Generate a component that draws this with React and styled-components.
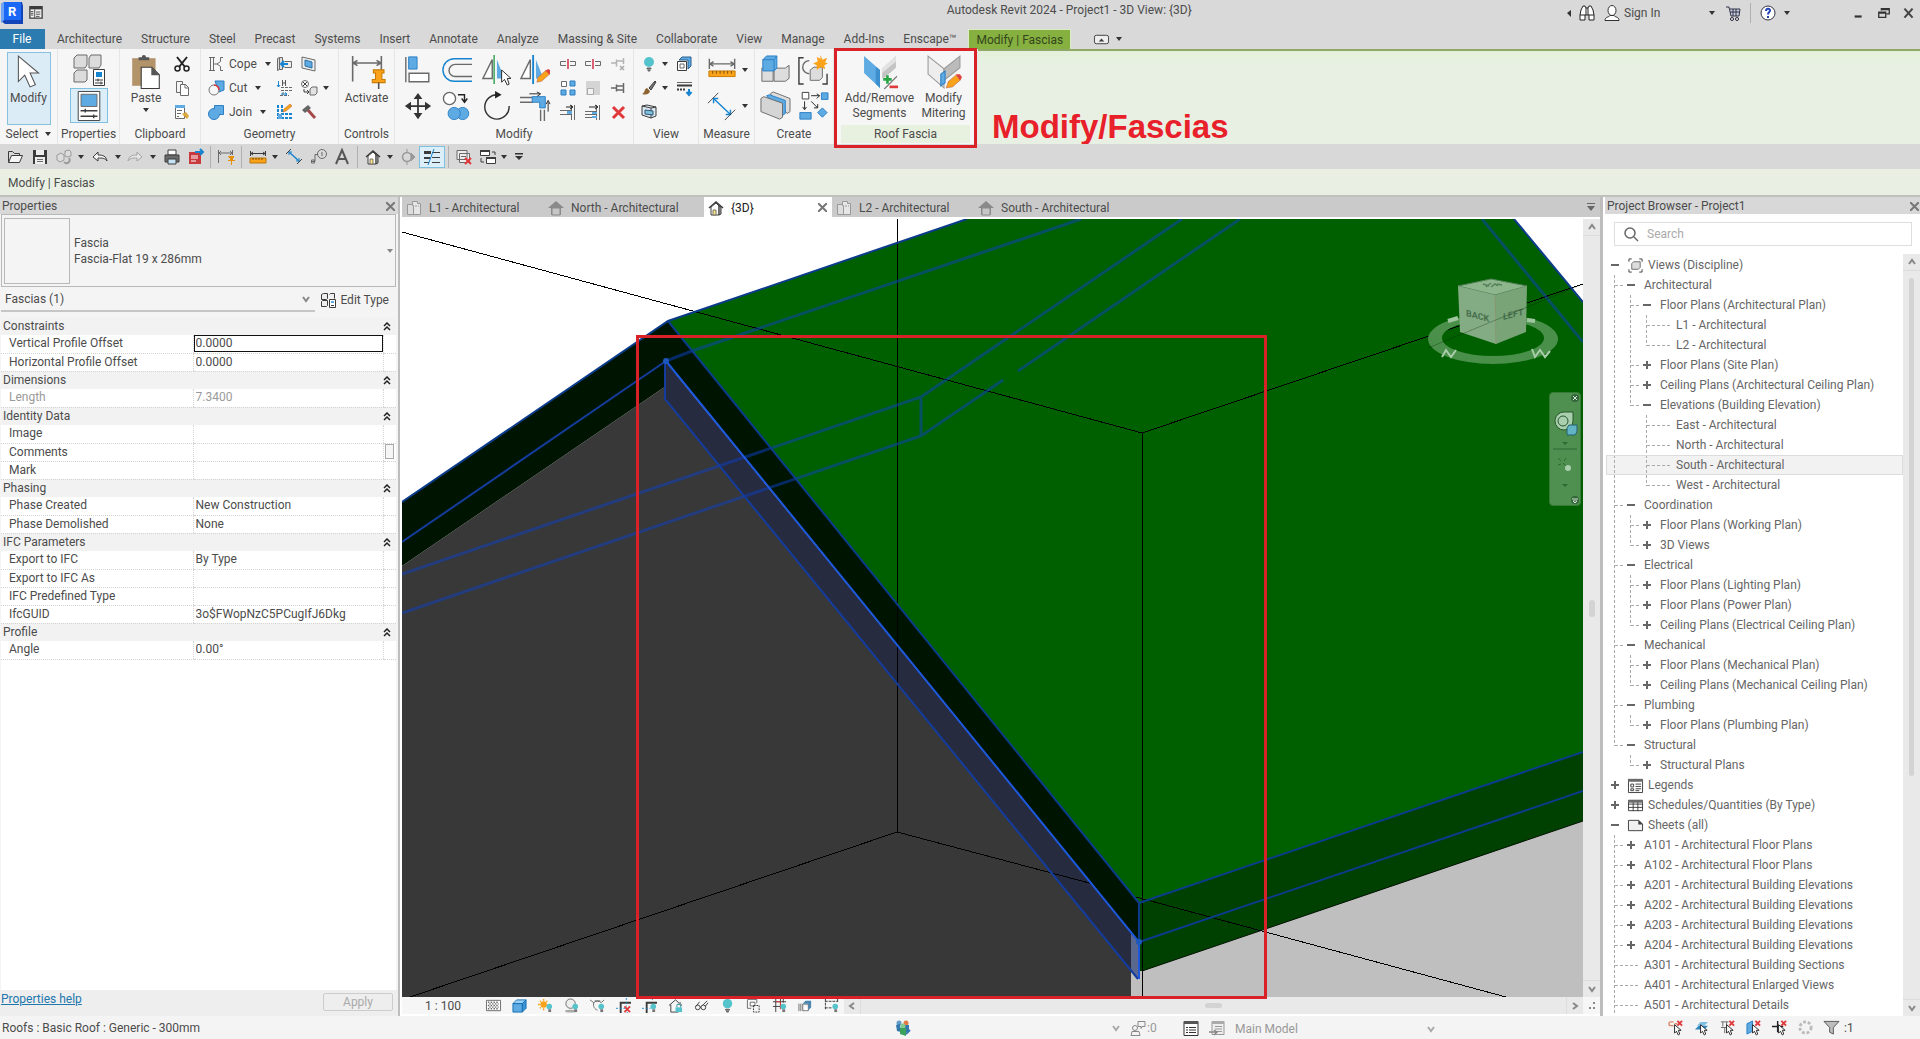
import React, { useState } from 'react';
import styled, { createGlobalStyle, css } from 'styled-components';

const FONT = `Roboto, 'Open Sans', 'Liberation Sans', sans-serif`;

const GlobalStyle = createGlobalStyle`
  * { box-sizing: border-box; }
  body {
    margin: 0;
    overflow: hidden;
    font-family: ${FONT};
    font-size: 12px;
    line-height: 16px;
    color: #4c4c4c;
    background: #f4f4f4;
  }
  button, input, select {
    font: inherit;
    color: inherit;
    border: 0;
    background: none;
    padding: 0;
    margin: 0;
    border-radius: 0;
  }
  svg { display: block; flex: none; }
`

/* ---------- drawings ---------- */

const B = '#5eaae2';
const D = '#3c3c3c';
const G = '#6a6a6a';
const O = '#f9a21a';

const redX = (x, y, s = 6) => <path d={`M${x} ${y}l${s} ${s}M${x + s} ${y}l${-s} ${s}`} stroke="#e0393c" strokeWidth="2" fill="none" />;
const bulb = (x, y) => <><circle cx={x} cy={y} r="3" fill="#55c3cc" /><path d={`M${x - 1} ${y + 3}h3v3h-3z`} fill="#777" /></>;
const pointer = (x, y) => <path d={`M${x} ${y}v9l2-2 2 4 1.500-1-1.500-4h3z`} fill="#fff" stroke="#222" />;

// 16 unit drawings
const small = {
  cut: <><path d="M3 1l8 10M13 1L5 11" stroke="#222" strokeWidth="2" /><circle cx="3.500" cy="12.500" r="2.500" stroke="#222" strokeWidth="1.500" fill="none" /><circle cx="12.500" cy="12.500" r="2.500" stroke="#222" strokeWidth="1.500" fill="none" /></>,
  copy: <><path d="M2.500 1.500h6v11h-6z" fill="#f5f5f5" stroke={G} /><path d="M6.500 4.500h5l3 3v8h-8z" fill="#fff" stroke={G} /><path d="M11 4v4h4" fill="none" stroke={G} /></>,
  match: <><path d="M1.500 1.500h9v13h-9z" fill="#fff" stroke={G} /><path d="M1 1h10v3H1z" fill={B} /><path d="M3 6.500h5M3 9.500h4M3 12.500h2" stroke={G} /><path d="M8 10l5 5 2-3-3-4z" fill="#dba63c" /></>,
  cope: <><path d="M1 1.500h6M1 14.500h6M2.500 2v12M5.500 2v12" stroke={G} fill="none" /><path d="M15 1.500h-2.500v4L9 8l3.500 2.500v4H15M9 8H6" stroke={G} fill="none" /></>,
  cutGeo: <><path d="M7 1h9v9l-5 2z" fill={B} stroke="#2a7fc5" /><circle cx="6" cy="10" r="5" fill="#f7f7f7" stroke="#777" /><path d="M6 5a5 5 0 0 1 5 5" stroke="#d33" strokeWidth="1.500" fill="none" /></>,
  join: <><path d="M6.500 1.500h9v9h-9z" fill={B} stroke="#2a7fc5" /><circle cx="6" cy="10" r="5.500" fill={B} stroke="#2a7fc5" /><path d="M7 2h8v8H7z" fill={B} /></>,
  wallJoin: <><path d="M1.500 2.500l2-1v12l-2 1zM3.500 1.500h3v12h-3" fill="#ddd" stroke={G} /><path d="M8.500 5.500h7v6h-7" fill="#eee" stroke={G} /><path d="M5 8h7M8 5L5 8l3 3" stroke="#1684cf" strokeWidth="2" fill="none" /></>,
  beam: <><path d="M5 7.500h11M5 10.500h11M7 12v4M4 15.500h9" stroke={G} fill="none" strokeDasharray="3 1" /><path d="M6.500 0v6M9.500 0v6M6 3h4" stroke="#555" fill="none" /><path d="M2.500 1v6M1 5l1.500 2L4 5M5 14h6M9 12.500l2 1.500-2 1.500" stroke="#1684cf" fill="none" /></>,
  unjoin: <><path d="M2 1v13h14M6 1v9h10" stroke="#1684cf" strokeWidth="2" strokeDasharray="3 1" fill="none" /><path d="M2 10h4v5H2z" fill={B} /><path d="M7 8l1-3 6-5 2 2-6 5z" fill={O} stroke="#b05a20" strokeWidth=".5" /></>,
  face: <><path d="M1 1l13 3v11L1 12z" fill="#eee" stroke={G} /><path d="M4 4l7 2v6l-7-2z" fill={B} stroke="#2a6fa5" /></>,
  demol: <><circle cx="4" cy="4" r="3.500" fill="#fff" stroke={G} /><path d="M2 2l4 4M6 2L2 6M3 9v3h5M6 10l2 2-2 2" stroke={D} fill="none" /><path d="M9 9l2-2h5v6l-2 2H9z" fill="#e2e2e2" stroke={G} /></>,
  hammer: <><path d="M6 5l8 9" stroke="#a54a4a" strokeWidth="3" /><path d="M1 6l6-5 3 3-6 5z" fill="#666" /></>,
  split: <><path d="M6 5.500H.500v4H6M10 5.500h5.500v4H10" stroke={G} fill="none" /><path d="M8 3v10" stroke="#cf3049" strokeWidth="1.500" /></>,
  array: <><path d="M1.500 1.500h5v5h-5z" fill="#fff" stroke={G} /><path d="M10 1h5v5h-5zM1 10h5v5H1zM10 10h5v5h-5z" fill={B} stroke="#2a7fc5" /></>,
  scale: <><path d="M1 1h14v14H1z" fill="#d4d4d4" /><path d="M2.500 8.500h6v6h-6z" fill="#f2f2f2" stroke="#aaa" /></>,
  trim1: <><path d="M0 6.500h11M0 10.500h11M14.500 1v15M11.500 1v15" stroke={G} /><path d="M6 3h6M10 1l3 2-3 2" stroke="#222" fill="none" /><path d="M7 7h5v3H7z" fill={B} /></>,
  trim2: <><path d="M0 7.500h11M0 10.500h11M0 13.500h11M14.500 1v15M11.500 1v15" stroke={G} /><path d="M4 3h7M10 1l3 2-3 2" stroke="#222" fill="none" /><path d="M7 8h5v2H7zM7 12h5v2H7z" fill={B} /></>,
  pin: <path d="M1 8h5M6.500 4.500v7M7 6h6M7 10h6M13.500 3v10" stroke={G} strokeWidth="1.500" fill="none" />,
  unpin: <><path d="M1 7h5M6.500 3.500v7M7 5h6M13.500 2v6" stroke="#b4b4b4" strokeWidth="1.500" fill="none" /><path d="M10 10l4 4M14 10l-4 4" stroke="#aaa" strokeWidth="1.500" /></>,
  del: <path d="M3 3l11 11M14 3L3 14" stroke="#e0393c" strokeWidth="3" />,
  light: <><circle cx="8" cy="6" r="5" fill="#55c3cc" /><path d="M6 12h4v1H6zM7 14h2v1H7z" fill="#666" stroke="#666" /></>,
  brush: <><path d="M8 8l6-7 1 1-5 8z" fill="#777" stroke={D} /><path d="M1 14c3-1 2-5 5-6l3 3c-1 4-5 4-8 3z" fill="#8b6430" /></>,
  viewBox: <><path d="M1.500 5.500h9v9h-9z" fill="#fff" stroke={D} /><path d="M4 8h4v4H4z" fill="#fff" stroke={G} /><path d="M3 4l3-3h9v9l-3 3V4z" fill={B} stroke="#2a5f8f" /></>,
  lineWeight: <><path d="M1 2.500h15" stroke={G} /><path d="M1 5.500h15" stroke={D} strokeWidth="2" /><path d="M1 9.500h9" stroke={D} strokeDasharray="2 1" strokeWidth="2" /><path d="M13 9v5M10.500 12l2.500 3 2.500-3" stroke="#1684cf" strokeWidth="2" fill="none" /></>,
  secBox: <><path d="M1 2l9 2v10l-9-3zM10 4l5-1v9l-5 2M1 2l5-1 9 2" fill="#d7e8f0" stroke={D} /><path d="M4 6l8 1v4l-8-1z" fill="#7ec2dd" stroke="#357" /></>,
  open: <><path d="M1.500 13.500v-11h4l2 2h5v3" fill="none" stroke={D} /><path d="M1.500 13.500l3-7h11l-3 7z" fill="#f5f5f5" stroke={D} /></>,
  save: <><path d="M1 1h14v14H1z" fill={D} /><path d="M4 1h8v5H4z" fill="#eee" /><path d="M3 8h10v7H3z" fill="#eee" /><path d="M5 10.500h6M5 12.500h6" stroke={G} /></>,
  sync: <><path d="M1 6l4-2 3 2v5l-4 2-3-2z" fill="#ddd" stroke="#999" /><path d="M9 2l4-1 2 2v4l-4 1-2-1z" fill="#ddd" stroke="#999" /><path d="M8 13a3 3 0 1 0 5-4" fill="none" stroke="#999" strokeWidth="2" /></>,
  undo: <path d="M1 8l5-5v3c5 0 8 1 9 6-2-3-5-3-9-3v3z" fill="#f5f5f5" stroke={D} />,
  redo: <path d="M15 8l-5-5v3c-5 0-8 1-9 6 2-3 5-3 9-3v3z" fill="#e5e5e5" stroke="#a5a5a5" />,
  print: <><path d="M4 1h8v5H4z" fill="#fff" stroke={D} /><path d="M1 6h14v7H1z" fill={G} stroke={D} /><path d="M4 10h8v5H4z" fill="#c7e2f4" stroke={D} /></>,
  exportPdf: <><path d="M1 3h12v12H1z" fill="#c93a3f" /><path d="M3 7h7M3 9h7M3 12h5" stroke="#fff" /><path d="M7 3h7M12 0l3 3-3 3" stroke="#1684cf" strokeWidth="2" fill="none" /></>,
  dimPin: <><path d="M.500 1v13M14.500 1v5M1 4h13M3 2L1 4l2 2M12 2l2 2-2 2" stroke={G} fill="none" /><path d="M10 7h6v2h-1v2h2v1h-3v4h-1v-4h-3v-1h2V9h-1z" fill="#e58f0a" /></>,
  measure: <><path d="M.500 2v5M15.500 2v5M1 4.500h14M3 3L1 4.500 3 6M13 3l2 1.500L13 6" stroke={D} fill="none" /><path d="M0 9h16v5H0z" fill={O} stroke="#b8760a" /><path d="M3 9v2M6 9v2M9 9v2M12 9v2" stroke="#7a5000" /></>,
  align: <><path d="M3 3l10 9" stroke="#1684cf" strokeWidth="1.500" /><path d="M3 6V3h3M13 9v3h-3" stroke="#1684cf" fill="none" /><path d="M0 5l5-5M11 15l5-5" stroke={D} /></>,
  tag: <><circle cx="11" cy="5" r="4.500" fill="none" stroke={G} /><path d="M11 3v4M1 12.500h3v-7h3M.500 11h3v3h-3z" stroke={G} fill="none" /></>,
  text: <path d="M2 15L8 1l6 14M4.500 10h7" stroke="#555" strokeWidth="2" fill="none" />,
  house: <><path d="M1 8l7-6 7 6" fill="none" stroke={D} strokeWidth="1.500" /><path d="M3 7l5-4 3 3v9H3z" fill="#fff" stroke={D} /><path d="M11 6l2 1v7l-2 1z" fill="#aaa" stroke={D} /><path d="M5 10h3v5H5z" fill="#ffe287" stroke="#776" /></>,
  elev: <><path d="M0 8l8-7 8 7h-3v7H3V8z" fill="#8a8a8a" /><path d="M4 8h8v7H4z" fill="#c6c6c6" stroke="#8a8a8a" /></>,
  plan: <><path d="M1.500 4.500h7v10h-7z" fill="#ddd" stroke="#999" /><path d="M6.500 1.500h5v2h3v11h-7v-9h-1z" fill="#e6e6e6" stroke="#999" /><path d="M9 6h4" fill="none" stroke="#999" strokeDasharray="2 1" /></>,
  section: <><circle cx="8" cy="8" r="4.500" fill="none" stroke="#999" strokeWidth="1.500" /><path d="M12 4l4 4-4 4zM8 0v3M8 13v3" fill="#999" stroke="#999" /></>,
  thin: <><path d="M0 2h7v3H0zM0 8h6v2H0z" fill={D} /><path d="M0 13.500h5M8 3.500h8M8 8.500h8M8 13.500h8" stroke={D} /><path d="M10 0L4 16" stroke="#1684cf" /></>,
  closeWin: <><path d="M1 1.500h10v9H1zM3.500 4.500h10v9h-10z" fill="#eee" stroke={G} /><path d="M5 7.500h5M5 10.500h4" stroke={G} />{redX(9, 9)}</>,
  switchWin: <><path d="M.500 1.500h9v5h-9zM6.500 8.500h9v6h-9z" fill="#fff" stroke={D} /><path d="M0 2h10M6 9h10" stroke={D} strokeWidth="2" /><path d="M15 6V3h-3M1 9v4h3" stroke={D} fill="none" /></>,
  views: <><path d="M4 1H1v3M12 1h3v3M4 15H1v-3M12 15h3v-3" stroke={D} fill="none" /><path d="M4 6l2-2h7v6l-2 2H4z" fill="#ddd" stroke={G} /></>,
  legend: <><path d="M.500 1.500h15v14H.500z" fill="#fff" stroke={D} /><path d="M0 1h16v3H0z" fill={G} /><path d="M3 6.500h3v3H3zM3 11.500h3v2H3zM8 6.500h6M8 9h6M8 11.500h6M8 13.500h4" stroke={D} fill="none" /></>,
  schedule: <><path d="M.500 2.500h15v11H.500zM0 6.500h16M0 10h16M5.500 3v11M10.500 3v11" fill="none" stroke={D} /><path d="M0 2h16v3H0z" fill={G} /></>,
  sheet: <><path d="M.500 2.500h11l4 4v7H.500z" fill="#f0f0f0" stroke={D} /><path d="M11 2v5h5z" fill={D} /></>,
  editType: <><path d="M1.500 2.500l2-1h4v5l-1 1h-5zM9.500 2.500l1-1h4v5M1.500 9.500l1-1h5v5l-1 1h-5z" fill="#eee" stroke={D} /><path d="M9.500 7.500h6v8h-6z" fill="#fff" stroke={D} /><path d="M11 9h3v2h-3z" fill={B} /><path d="M11 13.500h3" stroke={D} /></>,
  detail: <><path d="M.500 2.500h15v11H.500z" fill="#fff" stroke={G} /><path d="M2 4.500h12M2 8h12M2 11.500h12" stroke={G} strokeWidth="1.500" strokeDasharray="1.500 1.500" /><path d="M3.500 6.250h10M3.500 9.750h10" stroke={G} strokeWidth="1.500" strokeDasharray="1.500 1.500" /></>,
  cube: <><path d="M1 6l4-4h10l-4 4z" fill="#9bd0f5" stroke="#1470b4" /><path d="M1 6h10v9H1z" fill={B} stroke="#1470b4" /><path d="M11 6l4-4v9l-4 4z" fill="#3b93d5" stroke="#1470b4" /></>,
  sun: <><circle cx="6" cy="7" r="3.500" fill={O} /><path d="M6 1v2M6 11v2M0 7h2M2 3l1 1M10 3L9 4M2 11l1-1" stroke={O} strokeWidth="1.500" />{bulb(12, 9)}</>,
  shadow: <><ellipse cx="7" cy="14" rx="6" ry="1.500" fill="#aaa" /><circle cx="7" cy="6" r="5" fill="#eee" stroke={G} />{bulb(12, 9)}</>,
  teapot: <><path d="M0 2l4 3c1-2 7-2 8 0l3-3M4 5c-1 4 1 7 4 8M5 3h6" fill="none" stroke={G} />{bulb(12, 9)}</>,
  cropOff: <><path d="M5 16V5h11" fill="none" stroke={D} strokeWidth="2" /><path d="M0 11h12v5M11 0v9" fill="none" stroke="#1684cf" strokeDasharray="2 2" />{redX(9, 9)}</>,
  crop: <><path d="M5 16V5h11" fill="none" stroke={D} strokeWidth="2" /><path d="M0 11h9M11 0v3" fill="none" stroke="#1684cf" strokeDasharray="2 2" />{bulb(12, 9)}</>,
  lock: <><path d="M1 8l7-6 7 6M3 7v8h8" fill="none" stroke={D} /><path d="M10 5l4 4v-5z" fill="#999" /><path d="M8 10h7v5H8z" fill="#55c3cc" /><path d="M9.500 10V7h4v3" fill="none" stroke="#3a9aa3" /></>,
  glasses: <><circle cx="4" cy="10" r="2.500" fill="none" stroke={D} /><circle cx="10" cy="10" r="2.500" fill="none" stroke={D} /><path d="M2 9l4-5M9 8l5-5M6.500 10h1M12 9l3-4" stroke={D} /></>,
  analytic: <><path d="M1.500 1.500h10v4M1.500 2v9h4" fill="none" stroke={G} /><path d="M4.500 4.500h5v4h-5z" fill="#fff" stroke={G} /><path d="M8 8h6v7H8z" fill="none" stroke={D} strokeDasharray="2 1" /></>,
  grid: <><path d="M1 4h14M1 9h9M4 1v14M9 1v10M12 1v4" stroke={D} /><path d="M4 4h5v8" stroke="#d33" fill="none" />{bulb(12, 9)}</>,
  shape: <><path d="M5 6.500h6v7H5zM1 6v8M3 6v8" fill="none" stroke={G} /><path d="M5 6l3-3h6v7l-3 3V6z" fill="#4887b0" /><path d="M7 9h3v4H7z" fill="#fff" /></>,
  reveal: <><path d="M1.500 1v12M14.500 1v4M1 3.500h14M1 10.500h8" fill="none" stroke={D} strokeDasharray="3 1" />{bulb(12, 9)}</>,
  bino: <><path d="M2 5l2-4h2l1 2h2l1-2h2l2 4 1 5v5h-5v-5H6v5H1v-5z" fill="#fff" stroke="#222" /><path d="M7 3v7M9 3v7M1 10h5M10 10h5" stroke="#222" /></>,
  user: <><ellipse cx="8" cy="5.500" rx="4" ry="5" fill="#fff" stroke="#333" /><path d="M1 15.500c0-4 4-3 5-5h4c1 2 5 1 5 5z" fill="#fff" stroke="#333" /></>,
  cart: <><path d="M1 2h3l2 9h8l1-7H5" fill="#c9cfe3" stroke="#334" /><path d="M5 7h9M8 4v7M11 4v7" stroke="#334" /><circle cx="7" cy="14" r="1.500" fill="#fff" stroke="#223" /><circle cx="12" cy="14" r="1.500" fill="#fff" stroke="#223" /></>,
  help: <><circle cx="8" cy="8" r="7" fill="#fff" stroke="#334" /><path d="M6 6c0-3 4-3 4-.500C10 7.500 8 7 8 9.500M8 11v2" stroke="#2244bb" strokeWidth="2" fill="none" /></>,
  min: <path d="M3 12h8" stroke="#333" strokeWidth="2.500" />,
  restore: <path d="M5 5V3h9v6h-3M2 7h8v6H2zM5 4h9M2 8h8" fill="none" stroke="#333" strokeWidth="1.500" />,
  close: <path d="M3 2l10 11M13 2L3 13" stroke="#444" strokeWidth="2.500" />,
  home: <><path d="M1 2h14v13H1z" fill="#f5f5f5" stroke={D} strokeWidth="1.500" /><path d="M1 2h14v3H1z" fill={D} /><path d="M2 7.500h3M2 9.500h3M2 11.500h3M8 8h5M8 10.500h5M8 13h4M6.500 5v10" stroke={D} /></>,
  minimize: <><rect x=".500" y="3.500" width="15" height="9" rx="2" fill="#eee" stroke={D} /><path d="M5 10l3-3 3 3z" fill={D} /></>,
  search: <><circle cx="7" cy="7" r="5" fill="none" stroke="#666" strokeWidth="1.500" /><path d="M11 11l4 4" stroke="#666" strokeWidth="1.500" /></>,
  people: <><circle cx="4" cy="3" r="2.500" fill="#5f9ec9" /><circle cx="11" cy="3" r="2.500" fill="#e37b45" /><path d="M1 5l4-1 1 8-4-1zM9 5h5v7H9z" fill="#3478ae" /><circle cx="8" cy="6" r="2.500" fill="#86c98f" /><path d="M5 8h6v8l-6-2z" fill="#3ba25c" /><path d="M11 14l4-4" stroke="#3478ae" strokeWidth="2" /></>,
  requests: <><path d="M8 1.500h7v5h-3l-1 2v-2H8z" fill="none" stroke="#888" /><circle cx="5" cy="8" r="2.500" fill="none" stroke="#888" /><path d="M1 15.500l1-4h7l1 4z" fill="none" stroke="#888" /></>,
  list: <><path d="M1 1.500h14v14H1z" fill="#fff" stroke="#333" /><path d="M1 1h14v3H1z" fill="#555" /><path d="M3 7.500h2M3 10h2M3 12.500h2M6 7.500h7M6 10h7M6 12.500h7" stroke="#333" /></>,
  listOff: <><path d="M3 1.500h12v13H3z" fill="#eee" stroke="#999" /><path d="M3 1h12v3H3z" fill="#aaa" /><path d="M6 6.500h7M6 9h7M6 11.500h7" stroke="#999" /><path d="M0 12h7M5 10l3 2-3 3" stroke="#888" strokeWidth="1.500" fill="none" /></>,
  selLink: <><path d="M6 6H3a2 2 0 0 1 0-4h3M7 4h3" stroke="#d98a6a" strokeWidth="1.500" fill="none" />{redX(10, 1, 5)}{pointer(7, 5)}</>,
  selUnder: <><path d="M1 10l4-4h10l-4 4z" fill="#2f87c0" /><path d="M3 6l4-4h8l-4 4z" fill="#7fbfe3" />{pointer(7, 5)}</>,
  selPin: <><path d="M1 2h8M3 2v5M7 2v5M1 8h8M5 8v6" stroke={G} fill="none" />{redX(10, 1, 5)}{pointer(7, 5)}</>,
  selFace: <><path d="M1 4l6-3v11l-6 3z" fill={B} stroke="#2a7fc5" />{redX(10, 1, 5)}{pointer(7, 5)}</>,
  drag: <><path d="M0 7h12M6 1v12" stroke="#222" strokeWidth="1.500" />{redX(10, 1, 5)}{pointer(7, 5)}</>,
  wait: <circle cx="8" cy="8" r="6" fill="none" stroke="#bbb" strokeWidth="3" strokeDasharray="3 2" />,
  filter: <path d="M0 1.500h16L10 8v7l-4-2V8z" fill="#bdbdbd" stroke="#555" />,
};

// 32 unit drawings
const large = {
  arrow: <path d="M6 1v24l6-6 5 11 5-2-5-11h8z" fill="#fff" stroke="#555" />,
  typeProps: <><path d="M1 4l3-3h10v10l-2 3H1zM16 4l2-3h10v10l-2 3H16zM1 19l3-3h10v10l-2 2H1z" fill="#dcdcdc" stroke={G} /><path d="M20.500 15.500h11v16h-11z" fill="#fff" stroke={D} /><path d="M23 18h6v5h-6z" fill="#1684cf" /><path d="M22 26h8M22 29h8M25 24.500v3M28 27.500v3" stroke={D} /></>,
  props: <><path d="M4.500.500h23v31h-23z" fill="#fff" stroke={D} /><path d="M7.500 3.500h17v13h-17z" fill={B} stroke="#666" /><path d="M7 21h18M7 27h18M12 19v4M21 25v4" stroke={D} strokeWidth="1.500" /></>,
  paste: <><path d="M3 3h22v26H3z" fill="#b3936a" /><path d="M9 5h10V2h-3a2 2 0 0 0-4 0H9z" fill="#555" /><path d="M11.500 11.500h10l7 7v13h-17z" fill="#fff" stroke={D} /><path d="M21 11v8h8z" fill="#555" /></>,
  activate: <><path d="M2.500 1v24M29.500 1v14M3 7.500h26M7 5L3 7.500 7 10M25 5l4 2.500L25 10" stroke={G} strokeWidth="1.500" fill="none" /><path d="M22 14h10v3h-2v6h3v3H21v-3h3v-6h-2z" fill={O} stroke="#c87b00" /><path d="M27 26v6" stroke="#555" strokeWidth="1.500" /></>,
  alignG: <><path d="M3 2v27" stroke={G} strokeWidth="1.500" /><path d="M6 2h9v13H6z" fill={B} stroke="#2a7fc5" /><path d="M6.500 19.500h21v9h-21z" fill="#fff" stroke={G} strokeWidth="1.500" /></>,
  offset: <><path d="M32 4H13a12 12 0 0 0 0 24h19" fill="none" stroke="#1684cf" strokeWidth="1.500" /><path d="M32 10H14a6 6 0 0 0 0 13h18" fill="none" stroke={G} strokeWidth="1.500" /></>,
  mirrorPick: <><path d="M12 5v20H2z" fill="#fff" stroke={G} strokeWidth="1.500" /><path d="M14 0v31" stroke="#2fa04f" strokeWidth="1.500" /><path d="M17 5l8 20h-8z" fill={B} /><path d="M22 16v13l3-3 3 6 2-1-2-6h4z" fill="#fff" stroke="#222" /></>,
  mirrorDraw: <><path d="M11 5v20H1z" fill="#fff" stroke={G} strokeWidth="1.500" /><path d="M14 0v31" stroke="#1684cf" strokeWidth="2" /><path d="M17 5l8 20h-8z" fill={B} /><path d="M18 29l1-5 9-8 4 4-9 8z" fill={O} stroke="#a55" strokeWidth=".5" /><path d="M27 17l3-2 2 1v5z" fill="#df4440" /></>,
  move: <><path d="M16 6v20M6 16h20" stroke="#333" strokeWidth="2" /><path d="M16 1l5 7H11zM16 31l5-7H11zM1 16l7-5v10zM31 16l-7-5v10z" fill="#333" /></>,
  copyG: <><circle cx="8" cy="8" r="6.500" fill="#fff" stroke={G} strokeWidth="1.500" /><path d="M17 4h7v7M21 8l3 4 3-4" stroke="#222" strokeWidth="1.500" fill="none" /><circle cx="22" cy="24" r="6.500" fill={B} stroke="#2a7fc5" /><circle cx="13" cy="24" r="6.500" fill={B} stroke="#2a7fc5" /></>,
  rotate: <><path d="M18 4a13 13 0 1 0 12 12" fill="none" stroke="#333" strokeWidth="1.500" /><path d="M15 0l7 4-7 4z" fill="#222" /></>,
  trim: <><path d="M0 7h14M0 12h14M22 20v12M26 20v12" stroke={G} strokeWidth="1.500" /><path d="M10 3h11M18 1l4 2-4 3M30 22V12M28 14l2-4 2 4" stroke="#222" fill="none" /><path d="M13 6h14v12h-6v-6h-8z" fill={B} stroke="#2a7fc5" /></>,
  measureL: <><path d="M2.500 4v11M29.500 4v11M3 9.500h26M7 7L3 9.500 7 12M25 7l4 2.500L25 12" stroke={G} strokeWidth="1.500" fill="none" /><path d="M2 17h28v6H2z" fill={O} stroke="#c87b00" /><path d="M6 17v3M10 17v3M14 17v3M18 17v3M22 17v3M26 17v3" stroke="#7a5000" /></>,
  alignedL: <><path d="M7 8l18 17" stroke="#1684cf" strokeWidth="1.500" /><path d="M7 13V8h5M25 20v5h-5" stroke="#1684cf" strokeWidth="1.500" fill="none" /><path d="M1 13L12 2M19 31l11-11" stroke={D} /></>,
  group: <><path d="M2 14v14h12V14zM15 14h12l4-3v14l-4 3H15z" fill="#ddd" stroke={G} /><path d="M3 5l4-4h11v13l-3 3H3z" fill={B} stroke="#2a7fc5" /><path d="M3 5h12v12M15 5l3-4" fill="none" stroke="#2a7fc5" /></>,
  similar: <><path d="M6 3H1v28h5M26 31h5V20" fill="none" stroke={D} strokeWidth="1.500" /><path d="M12 6a7 7 0 1 0 0 14" fill="none" stroke={G} strokeWidth="1.500" /><path d="M13 16l4-3h9v11l-3 3H13z" fill="#ddd" stroke={G} /><path d="M24 0l2 5 5-2-2 5 3 1-4 2 1 4-5-2-4 3v-5l-4-2 5-2-1-5 4 2z" fill={O} /></>,
  parts: <><path d="M11 3l3-2 18 7v14l-3 2z" fill="#ddd" stroke={G} /><path d="M7 5l3-1 17 6v14l-3 2z" fill={B} stroke="#2a7fc5" /><path d="M1 8l3-2 20 7v15l-3 2-20-8z" fill="#d5d5d5" stroke={G} /></>,
  convert: <><path d="M4.500 1.500h7v7h-7z" fill="#fff" stroke={D} /><path d="M25 2h7v7h-7z" fill={B} stroke="#2a7fc5" /><path d="M14 5h9M20 3l3 2-3 3M7 11v8M5 17l2 3 2-3M14 11l7 7M21 14v4h-4" stroke="#222" fill="none" /><path d="M2 23h12v7H2z" fill={B} stroke="#2a7fc5" /><path d="M26 18l5 5-5 5-5-5z" fill={B} stroke="#2a7fc5" /></>,
  segments: <><path d="M1 1l15 13v17L1 17z" fill={B} /><path d="M12 11l4 3v17l-4-4z" fill="#3c8fcc" /><path d="M31 1L18 13v9l3-1 10-9z" fill="#c4c4c4" /><path d="M31 1L18 13v4L31 6z" fill="#e2e2e2" /><path d="M19 23h8M23 19v8" stroke="#27a744" strokeWidth="2.500" /><path d="M20 32l12-12" stroke="#777" /><path d="M25 30h8" stroke="#e0393c" strokeWidth="2.500" /></>,
  miter: <><path d="M1 1l15 12v18L1 18z" fill="#ededed" stroke="#999" /><path d="M31 1L16 13v11l15-12z" fill="#bbb" stroke="#999" /><path d="M13 18l4-3v11l-4 3z" fill={B} stroke="#2a7fc5" /><path d="M18 31l2-6 7-6 5 4-8 7z" fill={O} stroke="#a66" strokeWidth=".5" /><path d="M27 18h4l2 3-2 3z" fill="#df4440" /></>,
};

function Icon({ name, size = 16 }) {
  const big = large[name]
  const unit = big ? 32 : 16
  return (
    <svg width={size} height={size} viewBox={`0 0 ${unit} ${unit}`} fill="none" overflow="visible" aria-hidden="true">
      {big || small[name]}
    </svg>
  )
}

const Caret = ({ color = '#333' }) => (
  <svg width="6" height="4" viewBox="0 0 6 4"><path d="M0 0h6L3 4z" fill={color} /></svg>
)

const Cross = () => (
  <svg width="9" height="9" viewBox="0 0 9 9"><path d="M0 0l9 9M9 0L0 9" stroke="#777" strokeWidth="2" /></svg>
)

const Chevron = ({ turn = 0, color = '#888' }) => (
  <svg width="8" height="8" viewBox="0 0 8 8">
    <path d="M1 2l3 4 3-4" fill="none" stroke={color} strokeWidth="2" transform={`rotate(${turn} 4 4)`} />
  </svg>
)

/* ---------- frame ---------- */

const Shell = styled.div`
  display: flex;
  flex-direction: column;
  height: 100vh;
`
const center = css`
  display: flex;
  align-items: center;
  justify-content: center;
`
const IconButton = styled.button`
  ${center}
  width: ${p => p.$w || 24}px;
  height: ${p => p.$h || 24}px;
  flex: none;
`
const TitleBar = styled.header`
  display: grid;
  grid-template-columns: 945fr 616fr auto;
  height: 29px;
  background: #d9d9d9;
`
const Brand = styled.div`
  display: flex;
  align-items: flex-start;
  gap: 6px;
  padding: 2px 1px;
`
const Title = styled.div`
  padding-top: 2px;
  white-space: nowrap;
`
const TitleTools = styled.div`
  display: flex;
  align-items: center;
  height: 26px;
`
const WindowButtons = styled.div`
  display: flex;
  margin-left: 56px;
`
const SignIn = styled.button`
  width: 82px;
  text-align: left;
`
const Divider = styled.span`
  width: 1px;
  height: ${p => p.$h || 20}px;
  margin: 0 ${p => p.$m || 4}px;
  background: #b0b0b0;
`
const TabBar = styled.nav`
  display: flex;
  height: 20px;
  background: #d9d9d9;
`
const RibbonTab = styled.button`
  padding: 0 10px 0 9px;
  white-space: nowrap;
`
const FileTab = styled(RibbonTab)`
  width: 45px;
  margin-right: 3px;
  background: #2c7bb0;
  color: #fff;
`
const ActiveTab = styled(RibbonTab)`
  padding: 0 7px;
  margin: 0 16px 0 2px;
  border: solid #dcebc4;
  border-width: 1px 1px 0;
  background: #86b040;
  color: #34461c;
`
const Ribbon = styled.div`
  display: flex;
  height: 95px;
  background: #f6f6f6;
`
const RibbonFill = styled.div`
  flex: 1;
  display: flex;
  align-items: flex-end;
  padding-left: 14px;
  border-top: 2px solid #8fa866;
  background: linear-gradient(#e4f1da, #e8f0e4 16px);
`
const Note = styled.strong`
  font: bold 33px/34px 'Liberation Sans', Arial, sans-serif;
  color: #e8202a;
`
const Group = styled.section`
  position: relative;
  display: flex;
  flex-direction: column;
  flex: none;
  width: ${p => p.$w}px;
  padding: 3px 0 0;
  border-right: 1px solid #e6e6e6;
`
const GroupBody = styled.div`
  display: flex;
  justify-content: ${p => p.$start ? 'flex-start' : 'center'};
  height: 73px;
  padding: 0 ${p => p.$pad || 0}px;
`
const GroupLabel = styled.button`
  display: flex;
  align-items: center;
  justify-content: center;
  gap: 7px;
  height: 18px;
  margin: 0 ${p => p.$green ? 7 : 0}px;
  background: ${p => p.$green ? '#e8f0df' : 'none'};
`
const Marker = styled.span`
  position: absolute;
  inset: ${p => p.$inset};
  border: 3px solid #d92128;
  pointer-events: none;
`
const BigButton = styled.button`
  display: flex;
  flex-direction: column;
  align-items: center;
  gap: 2px;
  padding: 3px 0 0;
  width: ${p => p.$w}px;
  line-height: 15px;
  ${p => p.$on && css`
    background: #dcecf6;
    outline: 1px solid #86c2dd;
    outline-offset: -1px;
  `}
`
const Column = styled.div`
  display: flex;
  flex-direction: column;
  width: ${p => p.$w}px;
`
const Toggle = styled(IconButton)`
  border: 1px solid #7fbfdf;
  background: #dceef7;
`
const SmallRow = styled.button`
  display: flex;
  align-items: center;
  gap: 5px;
  height: 24px;
  svg:last-child { margin-left: 3px; }
`
const QuickBar = styled.div`
  display: flex;
  align-items: center;
  height: 25px;
  padding-left: 2px;
  background: #d8d8d8;
`
const OptionsBar = styled.div`
  height: 28px;
  padding: 6px 8px;
  border-bottom: 2px solid #bfc1bc;
  background: #e9f0e3;
`
const Work = styled.main`
  display: flex;
  flex: 1;
  min-height: 0;
`

/* ---------- properties ---------- */

const Panel = styled.aside`
  display: flex;
  flex-direction: column;
  flex: none;
  width: ${p => p.$w}px;
  background: #f4f4f4;
`
const PanelHead = styled.div`
  display: flex;
  align-items: center;
  justify-content: space-between;
  height: 17px;
  padding: 1px 0 0 2px;
  background: #d8d8d8;
`
const TypeSelector = styled.button`
  display: flex;
  align-items: center;
  gap: 4px;
  height: 73px;
  margin: 0 2px 0 1px;
  padding: 2px;
  border: 1px solid #b8b8b8;
  text-align: left;
  svg { margin-left: auto; }
`
const Preview = styled.span`
  width: 66px;
  height: 66px;
  border: 1px solid #b8b8b8;
`
const TypeRow = styled.div`
  display: flex;
  align-items: center;
  height: 30px;
  padding: 0 9px 4px 1px;
`
const InstanceSelect = styled.label`
  display: flex;
  align-items: center;
  flex: 1;
  height: 24px;
  padding-right: 5px;
  border-bottom: 2px solid #c6c6c6;
  select {
    flex: 1;
    appearance: none;
    padding-left: 4px;
    outline: 0;
  }
`
const EditType = styled.button`
  display: flex;
  align-items: center;
  gap: 4px;
  padding-left: 5px;
`
const PropScroll = styled.div`
  flex: 1;
  min-height: 0;
  margin: 0 2px 0 1px;
  background: #fff;
`
const PropTable = styled.table`
  width: 100%;
  table-layout: fixed;
  border-collapse: collapse;
  th, td {
    height: 18px;
    padding: 0;
    line-height: 16px;
    text-align: left;
    font-weight: normal;
  }
`
const Section = styled.tr`
  background: #f2f2f2;
  th { padding-left: 2px; }
`
const PropRow = styled.tr`
  color: ${p => p.$off ? '#9a9a9a' : '#4c4c4c'};
  th, td {
    vertical-align: top;
    border-bottom: 1px dotted #d4d4d4;
  }
  th { padding-left: 8px; }
  td { border-left: 1px dotted #d4d4d4; }
`
const Value = styled.input`
  display: block;
  width: 100%;
  height: 17px;
  padding: 0 0 1px ${p => p.$focus ? 1 : 2}px;
  border: ${p => p.$focus ? '1px solid #111' : 0};
  background: none;
  outline: 0;
`
const TinyButton = styled.button`
  display: block;
  width: 9px;
  height: 15px;
  margin-left: 1px;
  border: 1px solid #aaa;
  background: #f6f6f6;
`
const PropFoot = styled.div`
  display: flex;
  justify-content: space-between;
  height: 26px;
  padding: 1px 5px 0 1px;
  background: #eee;
  a { color: #2277ad; }
`
const Apply = styled.button`
  width: 70px;
  height: 18px;
  margin-top: 2px;
  border: 1px solid #ccc;
  border-radius: 2px;
  color: #aaa;
`
const Splitter = styled.div`
  flex: none;
  width: ${p => p.$w}px;
  border: solid #fff;
  border-width: 0 2px 0 0;
  background: #bdbdbd;
`

/* ---------- view area ---------- */

const ViewArea = styled.section`
  display: flex;
  flex-direction: column;
  flex: 1;
  min-width: 0;
  background: #fff;
`
const ViewTabs = styled.div`
  display: flex;
  height: 20px;
  margin-bottom: 2px;
  background: #cacaca;
`
const ViewTab = styled.button`
  display: flex;
  align-items: center;
  gap: 7px;
  width: ${p => p.$w}px;
  padding: 1px 5px 0 4px;
  background: ${p => p.$on ? '#fff' : 'none'};
  color: ${p => p.$on ? '#222' : '#4c4c4c'};
  svg + span { flex: 1; text-align: left; }
`
const Spacer = styled.span`
  flex: 1;
`
const ViewMiddle = styled.div`
  display: flex;
  flex: 1;
  min-height: 0;
`
const Canvas = styled.div`
  position: relative;
  flex: 1;
  min-width: 0;
  > svg {
    width: 100%;
    height: 100%;
  }
`
const ViewMarker = styled(Marker)`
  z-index: 1;
`
const NavBar = styled.div`
  position: absolute;
  top: 173px;
  right: 2px;
  display: flex;
  flex-direction: column;
  align-items: center;
  width: 32px;
  height: 114px;
  border: 1px solid #357a35;
  border-radius: 4px;
  background: #4f8f4f;
`
const ScrollV = styled.div`
  display: flex;
  flex-direction: column;
  align-items: center;
  justify-content: space-between;
  flex: none;
  width: ${p => p.$w || 17}px;
  background: #e9e9e9;
`
const Thumb = styled.span`
  width: ${p => p.$w}px;
  height: ${p => p.$h}px;
  border-radius: 3px;
  background: #d3d3d3;
`
const TreeThumb = styled(Thumb)`
  margin-top: 7px;
`
const ScrollButton = styled(IconButton)`
  border: solid #dcdcdc;
  border-width: ${p => p.$edge};
`
const ViewBar = styled.div`
  display: flex;
  align-items: center;
  height: 17px;
  margin-bottom: 2px;
  background: #f6f6f6;
`
const Scale = styled.button`
  width: 78px;
  padding-left: 4px;
`
const ScrollH = styled.div`
  display: flex;
  align-items: center;
  justify-content: space-between;
  flex: 1;
  height: 17px;
  background: #e9e9e9;
`

/* ---------- browser ---------- */

const SearchBox = styled.label`
  display: flex;
  align-items: center;
  gap: 8px;
  height: 24px;
  margin: 8px 8px 8px 9px;
  padding: 0 8px;
  border: 1px solid #dedede;
  background: #fff;
  input {
    flex: 1;
    min-width: 0;
    outline: 0;
  }
  input::placeholder { color: #aaa; opacity: 1; }
`
const Browser = styled(Panel)`
  background: #fff;
`
const TreeWrap = styled.div`
  display: flex;
  flex: 1;
  min-height: 0;
  overflow: hidden;
`
const Tree = styled.ul`
  flex: 1;
  margin: 0;
  padding: 1px 0 0 1px;
  list-style: none;
`
const Item = styled.li`
  display: flex;
  align-items: center;
  height: 20px;
  padding-left: 1px;
  white-space: nowrap;
  color: #666;
  ${p => p.$selected && css`
    background: #f2f2f2;
    outline: 1px solid #dcdcdc;
    outline-offset: -1px;
  `}
`
const dashV = 'repeating-linear-gradient(#aaa 0 3px, transparent 3px 5px)';
const dashH = 'repeating-linear-gradient(90deg, #aaa 0 3px, transparent 3px 5px)';
const Guide = styled.span`
  flex: none;
  width: ${p => p.$leaf ? 32 : 16}px;
  height: 20px;
  background-repeat: no-repeat;
  background-image: ${p => p.$line ? dashV : 'none'}, ${p => p.$elbow ? dashH : 'none'};
  background-position: 7px 0, 8px 10px;
  background-size: 1px ${p => p.$half ? 11 : 20}px, 100% 1px;
`
const Expander = styled.button`
  ${center}
  flex: none;
  width: 16px;
  height: 16px;
`
const ItemText = styled.span`
  display: flex;
  align-items: center;
  gap: 5px;
  padding-left: 5px;
`

/* ---------- status ---------- */

const Status = styled.footer`
  display: grid;
  grid-template-columns: 893fr 217fr 550fr auto;
  align-items: center;
  height: 23px;
  padding-left: 2px;
  background: #f4f4f4;
`
const StatusPart = styled.div`
  display: flex;
  align-items: center;
  gap: ${p => p.$gap || 0}px;
  white-space: nowrap;
`
const Design = styled.button`
  display: flex;
  align-items: center;
  justify-content: space-between;
  width: 200px;
  padding-top: 2px;
  color: #999;
`
const Count = styled.span`
  width: ${p => p.$w}px;
  color: ${p => p.$off ? '#999' : '#4c4c4c'};
`

/* ---------- data ---------- */

const tabs = ['Architecture', 'Structure', 'Steel', 'Precast', 'Systems', 'Insert', 'Annotate', 'Analyze',
  'Massing & Site', 'Collaborate', 'View', 'Manage', 'Add-Ins', 'Enscape™']

// name and cell width; "|" is a divider, "v" a caret
const quick = [
  ['open', 26], ['save', 24], ['sync', 24], ['v', 10], ['undo', 28], ['v', 8], ['redo', 26], ['v', 10],
  ['print', 28], ['exportPdf', 20], ['|', 4], ['dimPin', 22], ['|', 4], ['measure', 24], ['v', 10],
  ['align', 28], ['tag', 22], ['text', 24], ['|', 3], ['house', 24], ['v', 10], ['section', 24],
  ['thin', 26], ['|', 3], ['closeWin', 24], ['switchWin', 24], ['v', 8],
]

const properties = [
  ['Constraints', [['Vertical Profile Offset', '0.0000'], ['Horizontal Profile Offset', '0.0000']]],
  ['Dimensions', [['Length', '7.3400']]],
  ['Identity Data', [['Image', ''], ['Comments', ''], ['Mark', '']]],
  ['Phasing', [['Phase Created', 'New Construction'], ['Phase Demolished', 'None']]],
  ['IFC Parameters', [['Export to IFC', 'By Type'], ['Export to IFC As', ''], ['IFC Predefined Type', ''], ['IfcGUID', '3o$FWopNzC5PCugIfJ6Dkg']]],
  ['Profile', [['Angle', '0.00°']]],
]

const closed = name => ({ name, sign: '+' })
const open = (name, kids, icon) => ({ name, sign: '-', kids, icon })
const leaf = name => ({ name })

const tree = [
  open('Views (Discipline)', [
    open('Architectural', [
      open('Floor Plans (Architectural Plan)', [leaf('L1 - Architectural'), leaf('L2 - Architectural')]),
      closed('Floor Plans (Site Plan)'),
      closed('Ceiling Plans (Architectural Ceiling Plan)'),
      open('Elevations (Building Elevation)', [
        leaf('East - Architectural'), leaf('North - Architectural'),
        leaf('South - Architectural'), leaf('West - Architectural'),
      ]),
    ]),
    open('Coordination', [closed('Floor Plans (Working Plan)'), closed('3D Views')]),
    open('Electrical', [
      closed('Floor Plans (Lighting Plan)'), closed('Floor Plans (Power Plan)'),
      closed('Ceiling Plans (Electrical Ceiling Plan)'),
    ]),
    open('Mechanical', [closed('Floor Plans (Mechanical Plan)'), closed('Ceiling Plans (Mechanical Ceiling Plan)')]),
    open('Plumbing', [closed('Floor Plans (Plumbing Plan)')]),
    open('Structural', [closed('Structural Plans')]),
  ], 'views'),
  { name: 'Legends', sign: '+', icon: 'legend' },
  { name: 'Schedules/Quantities (By Type)', sign: '+', icon: 'schedule' },
  open('Sheets (all)', [
    closed('A101 - Architectural Floor Plans'), closed('A102 - Architectural Floor Plans'),
    closed('A201 - Architectural Building Elevations'), closed('A202 - Architectural Building Elevations'),
    closed('A203 - Architectural Building Elevations'), closed('A204 - Architectural Building Elevations'),
    leaf('A301 - Architectural Building Sections'), leaf('A401 - Architectural Enlarged Views'),
    { name: 'A501 - Architectural Details', more: true },
  ], 'sheet'),
]

// turn the nested tree into rows, each with the lines of its ancestors
function flatten(nodes, lines = [], depth = 0) {
  return nodes.flatMap((node, i) => {
    const last = i === nodes.length - 1 && !node.more
    const row = { ...node, lines, depth, last }
    const below = depth > 0 ? [...lines, !last] : lines
    return [row, ...(node.kids ? flatten(node.kids, below, depth + 1) : [])]
  })
}

/* ---------- pieces ---------- */

const Drop = ({ w = 10, h = 24 }) => <IconButton $w={w} $h={h} aria-label="More"><Caret /></IconButton>
const Tool = ({ name, w, h, size }) => <IconButton $w={w} $h={h} aria-label={name}><Icon name={name} size={size} /></IconButton>

function RibbonPanels() {
  return (
    <Ribbon>
      <Group $w={58}>
        <GroupBody><BigButton $w={44} $on><Icon name="arrow" size={34} />Modify</BigButton></GroupBody>
        <GroupLabel>Select <Caret /></GroupLabel>
      </Group>
      <Group $w={62}>
        <GroupBody>
          <Column $w={38}>
            <Tool name="typeProps" w={38} h={36} size={32} />
            <Toggle $w={38} $h={35} aria-label="Properties"><Icon name="props" size={30} /></Toggle>
          </Column>
        </GroupBody>
        <GroupLabel>Properties</GroupLabel>
      </Group>
      <Group $w={81}>
        <GroupBody $start $pad={9}>
          <BigButton $w={38}><Icon name="paste" size={34} />Paste<Caret /></BigButton>
          <Column $w={38}><Tool name="cut" w={38} /><Tool name="copy" w={38} /><Tool name="match" w={38} /></Column>
        </GroupBody>
        <GroupLabel>Clipboard</GroupLabel>
      </Group>
      <Group $w={138}>
        <GroupBody $start $pad={7}>
          <Column $w={68}>
            <SmallRow><Icon name="cope" />Cope <Caret /></SmallRow>
            <SmallRow><Icon name="cutGeo" />Cut <Caret /></SmallRow>
            <SmallRow><Icon name="join" />Join <Caret /></SmallRow>
          </Column>
          <Column $w={26}><Tool name="wallJoin" w={26} /><Tool name="beam" w={26} /><Tool name="unjoin" w={26} /></Column>
          <Column $w={24}><Tool name="face" /><Tool name="demol" /><Tool name="hammer" /></Column>
          <Column $w={10}><Drop h={72} /></Column>
        </GroupBody>
        <GroupLabel>Geometry</GroupLabel>
      </Group>
      <Group $w={56}>
        <GroupBody><BigButton $w={50}><Icon name="activate" size={34} />Activate</BigButton></GroupBody>
        <GroupLabel>Controls</GroupLabel>
      </Group>
      <Group $w={239}>
        <GroupBody $start $pad={3}>
          <Column $w={39}><Tool name="alignG" w={39} h={36} size={30} /><Tool name="move" w={39} h={36} size={28} /></Column>
          <Column $w={39}><Tool name="offset" w={39} h={36} size={30} /><Tool name="copyG" w={39} h={36} size={30} /></Column>
          <Column $w={39}><Tool name="mirrorPick" w={39} h={36} size={30} /><Tool name="rotate" w={39} h={36} size={30} /></Column>
          <Column $w={40}><Tool name="mirrorDraw" w={40} h={36} size={30} /><Tool name="trim" w={40} h={36} size={30} /></Column>
          <Column $w={26}><Tool name="split" w={26} /><Tool name="array" w={26} /><Tool name="trim1" w={26} /></Column>
          <Column $w={24}><Tool name="split" /><Tool name="scale" /><Tool name="trim2" /></Column>
          <Column $w={26}><Tool name="unpin" w={26} /><Tool name="pin" w={26} /><Tool name="del" w={26} /></Column>
        </GroupBody>
        <GroupLabel>Modify</GroupLabel>
      </Group>
      <Group $w={65}>
        <GroupBody $start $pad={4}>
          <Column $w={22}><Tool name="light" w={22} /><Tool name="brush" w={22} /><Tool name="secBox" w={22} /></Column>
          <Column $w={10}><Drop /><Drop /></Column>
          <Column $w={24}><Tool name="viewBox" w={28} /><Tool name="lineWeight" w={28} /></Column>
        </GroupBody>
        <GroupLabel>View</GroupLabel>
      </Group>
      <Group $w={56}>
        <GroupBody>
          <Column $w={36}><Tool name="measureL" w={36} h={36} size={30} /><Tool name="alignedL" w={36} h={36} size={30} /></Column>
          <Column $w={10}><Drop h={36} /><Drop h={36} /></Column>
        </GroupBody>
        <GroupLabel>Measure</GroupLabel>
      </Group>
      <Group $w={79}>
        <GroupBody>
          <Column $w={38}><Tool name="group" w={38} h={36} size={30} /><Tool name="parts" w={38} h={36} size={30} /></Column>
          <Column $w={38}><Tool name="similar" w={38} h={36} size={30} /><Tool name="convert" w={38} h={36} size={30} /></Column>
        </GroupBody>
        <GroupLabel>Create</GroupLabel>
      </Group>
      <Group $w={144}>
        <GroupBody>
          <BigButton $w={76}><Icon name="segments" size={34} />Add/Remove<br />Segments</BigButton>
          <BigButton $w={52}><Icon name="miter" size={34} />Modify<br />Mitering</BigButton>
        </GroupBody>
        <GroupLabel $green>Roof Fascia</GroupLabel>
        <Marker $inset="-1px 0 -4px" />
      </Group>
      <RibbonFill><Note>Modify/Fascias</Note></RibbonFill>
    </Ribbon>
  )
}

function QuickAccess() {
  return (
    <QuickBar>
      {quick.map(([name, w], i) => {
        if (name === '|') return <Divider key={i} $m={w} $h={22} />
        if (name === 'v') return <Drop key={i} w={w} />
        if (name === 'thin') return <Toggle key={i} $w={w} $h={22} aria-label="Thin lines"><Icon name="thin" /></Toggle>
        return <Tool key={i} name={name} w={w} />
      })}
      <IconButton $w={22} aria-label="Customize">
        <svg width="8" height="7" viewBox="0 0 8 7"><path d="M0 0h8v1.500H0zM0 3h8L4 7z" fill="#333" /></svg>
      </IconButton>
    </QuickBar>
  )
}

function PropertiesPanel() {
  const [values, setValues] = useState({})
  return (
    <Panel $w={398}>
      <PanelHead>Properties<IconButton $w={16} $h={16} aria-label="Close"><Cross /></IconButton></PanelHead>
      <TypeSelector>
        <Preview />
        <span>Fascia<br />Fascia-Flat 19 x 286mm</span>
        <Caret color="#888" />
      </TypeSelector>
      <TypeRow>
        <InstanceSelect>
          <select aria-label="Instance filter"><option>Fascias (1)</option></select>
          <Chevron />
        </InstanceSelect>
        <EditType><Icon name="editType" />Edit Type</EditType>
      </TypeRow>
      <PropScroll>
        <PropTable>
          <colgroup><col /><col width="190" /><col width="13" /></colgroup>
          <tbody>
            {properties.map(([section, rows]) => [
              <Section key={section}>
                <th colSpan="2">{section}</th>
                <td><svg width="8" height="9" viewBox="0 0 8 9"><path d="M1 4l3-3 3 3M1 8l3-3 3 3" fill="none" stroke="#222" strokeWidth="1.500" /></svg></td>
              </Section>,
              ...rows.map(([label, value]) => (
                <PropRow key={label} $off={label === 'Length'}>
                  <th>{label}</th>
                  <td>
                    <Value
                      aria-label={label}
                      readOnly={label === 'Length'}
                      $focus={label === 'Vertical Profile Offset'}
                      value={values[label] ?? value}
                      onChange={e => setValues({ ...values, [label]: e.target.value })}
                    />
                  </td>
                  <td>{label === 'Comments' && <TinyButton aria-label="Browse" />}</td>
                </PropRow>
              )),
            ])}
          </tbody>
        </PropTable>
      </PropScroll>
      <PropFoot>
        <a href="#help">Properties help</a>
        <Apply disabled>Apply</Apply>
      </PropFoot>
    </Panel>
  )
}

function Scene() {
  return (
    <svg viewBox="402 219 1181 778" preserveAspectRatio="xMidYMid slice" role="img" aria-label="3D roof view">
      <path d="M402 219h1181v778H402z" fill="#fff" />
      <path d="M1142 971L1583 821v176H1131v-64z" fill="#bfbfbf" />
      <path d="M402 566L666 386 1131 933V997H402z" fill="#383838" />
      <path d="M668 321L967 219h547l69 83v450L1139 903z" fill="#006000" />
      <path d="M668 321L402 502v64l264-180 9-14 464 570v-39z" fill="#001402" />
      <path d="M1139 903l444-151v69l-441 150h-3z" fill="#004000" />
      <path d="M665 361l474 581-1 37-473-580z" fill="#262b40" />
      <path d="M1131 933l8 9-1 37-7-9z" fill="#5a688e" />
      <path d="M1142 971l441-150" stroke="#001000" />
      <g stroke="#000" fill="none" shapeRendering="crispEdges">
        <path d="M402 232l740 201 441-149" />
        <path d="M897.500 219v613M1142.500 433v564M410 997l487-165 196 52M1136 897l370 100" />
      </g>
      <g stroke="#0b3fc4" strokeOpacity=".5" strokeWidth="3" fill="none">
        <path d="M666 361l26-10 389-132M402 574l519-177 261-178M402 613l519-177 82-56M1018 371l222-152M921 397v39M1482 219l101 123" />
      </g>
      <path d="M402 542l264-181M665 361v38l473 580" stroke="#143c9c" strokeWidth="2" fill="none" />
      <g stroke="#0b3c8c" strokeWidth="2" fill="none">
        <path d="M402 502l266-181 299-102M1514 219l69 83M668 321l471 582 444-151M1139 903v39l444-151" />
      </g>
      <path d="M666 361l473 581v37" stroke="#1d58dc" strokeWidth="2" fill="none" />
      <circle cx="666" cy="361" r="3" fill="#1d58bc" />
      <circle cx="1139" cy="942" r="3" fill="#1d58bc" />
      <g>
        <path fillRule="evenodd" d="M1428 339a65 25 0 1 0 130 0 65 25 0 1 0-130 0zM1442 338a51 18 0 1 0 102 0 51 18 0 1 0-102 0z" fill="#4a904a" />
        <path d="M1458 286l33-7 36 7-32 9z" fill="#8db68d" stroke="#56805a" />
        <path d="M1458 286l37 9 1 49-36-12z" fill="#84ac84" />
        <path d="M1495 295l32-9-1 46-30 12z" fill="#78a478" />
        <path d="M1495 295l1 49" stroke="#8d9a76" />
        <g fontFamily={FONT} fontWeight="bold" fontSize="9" fill="#486f4c">
          <text transform="translate(1466 316) skewY(14)">BACK</text>
          <text transform="translate(1503 320) skewY(-14)">LEFT</text>
        </g>
        <path d="M1483 284l6 2M1486 287l5-4M1491 287l4-3 3 2M1497 284l5 1" stroke="#56805a" strokeWidth="1.500" fill="none" />
        <path d="M1442 357l4-7 5 7 5-7M1532 349l3 8 5-7 5 7 5-6" stroke="#a9cda9" strokeWidth="2" fill="none" />
        <path d="M1448 321l10-3M1527 320l8 1" stroke="#9fc69f" strokeWidth="4" />
        <path d="M1428 348l155-64" stroke="#002000" strokeOpacity=".3" />
      </g>
    </svg>
  )
}

const viewIcons = ['detail', 'cube', 'sun', 'shadow', 'teapot', 'cropOff', 'crop', 'lock', 'glasses', 'light', 'analytic', 'grid', 'shape', 'reveal']

function ModelView() {
  return (
    <ViewArea>
      <ViewTabs>
        <ViewTab $w={142}><Icon name="plan" /><span>L1 - Architectural</span></ViewTab>
        <ViewTab $w={160}><Icon name="elev" /><span>North - Architectural</span></ViewTab>
        <ViewTab $w={128} $on><Icon name="house" /><span>{'{3D}'}</span><Cross /></ViewTab>
        <ViewTab $w={142}><Icon name="plan" /><span>L2 - Architectural</span></ViewTab>
        <ViewTab $w={160}><Icon name="elev" /><span>South - Architectural</span></ViewTab>
        <Spacer />
        <IconButton $w={18} $h={20} aria-label="All views"><svg width="8" height="8" viewBox="0 0 8 8"><path d="M0 0h8v1H0zM0 3h8L4 8z" fill="#666" /></svg></IconButton>
      </ViewTabs>
      <ViewMiddle>
        <Canvas>
          <Scene />
          <ViewMarker $inset="116px 316px -2px 234px" />
          <NavBar>
            <svg width="30" height="112" viewBox="0 0 30 112">
              <circle cx="25" cy="5" r="4" fill="#33663a" /><path d="M23 3l4 4M27 3l-4 4" stroke="#d8e8d8" />
              <path d="M5 27a9 9 0 0 1 9-8h9v9a9 9 0 1 1-18 0z" fill="#a9cfae" stroke="#28582c" />
              <circle cx="13" cy="28" r="5" fill="none" stroke="#28582c" />
              <path d="M17 35l2-3h8v7l-2 3h-8z" fill="#62b3c4" stroke="#23606e" />
              <path d="M12 49h6l-3 3zM12 91h6l-3 3z" fill="#2f6a34" />
              <path d="M3 56h24" stroke="#2f6a34" />
              <path d="M8 65l3 3M16 65l-2 3M8 72l3-1M13 70l4 4" stroke="#2f6a34" />
              <circle cx="18" cy="75" r="3" fill="#a9cfae" />
              <circle cx="25" cy="107" r="4" fill="#33663a" /><path d="M22 106h6M23 108h4l-2 2z" stroke="#d8e8d8" />
            </svg>
          </NavBar>
        </Canvas>
        <ScrollV>
          <ScrollButton $w={17} $h={17} $edge="0 0 1px" aria-label="Scroll up"><Chevron turn={180} /></ScrollButton>
          <Thumb $w={6} $h={17} />
          <ScrollButton $w={17} $h={17} $edge="1px 0 0" aria-label="Scroll down"><Chevron /></ScrollButton>
        </ScrollV>
      </ViewMiddle>
      <ViewBar>
        <Scale>1 : 100</Scale>
        {viewIcons.map(name => <Tool key={name} name={name} w={26} h={16} size={15} />)}
        <ScrollH>
          <ScrollButton $w={17} $h={17} $edge="0 1px 0 0" aria-label="Scroll left"><Chevron turn={90} /></ScrollButton>
          <Thumb $w={17} $h={5} />
          <ScrollButton $w={17} $h={17} $edge="0 0 0 1px" aria-label="Scroll right"><Chevron turn={-90} /></ScrollButton>
        </ScrollH>
        <IconButton $w={17} $h={16} aria-label="Resize">
          <svg width="8" height="8" viewBox="0 0 8 8"><path d="M5 0h2v2H5zM5 5h2v2H5zM1 5h2v2H1z" fill="#888" /></svg>
        </IconButton>
      </ViewBar>
    </ViewArea>
  )
}

function ProjectBrowser() {
  const [selected, setSelected] = useState('South - Architectural')
  return (
    <Browser $w={315}>
      <PanelHead>Project Browser - Project1<IconButton $w={12} $h={16} aria-label="Close"><Cross /></IconButton></PanelHead>
      <SearchBox><Icon name="search" /><input type="text" aria-label="Search" placeholder="Search" /></SearchBox>
      <TreeWrap>
        <Tree>
          {flatten(tree).map(row => (
            <Item key={row.name} $selected={row.name === selected} onClick={() => setSelected(row.name)}>
              {row.lines.map((line, i) => <Guide key={i} $line={line} />)}
              {row.depth > 0 && <Guide $line $elbow $half={row.last} $leaf={!row.sign} />}
              {row.sign && (
                <Expander aria-label={row.sign === '+' ? 'Expand' : 'Collapse'}>
                  <svg width="8" height="8" viewBox="0 0 8 8"><path d={row.sign === '+' ? 'M0 4h8M4 0v8' : 'M0 4h8'} stroke="#666" strokeWidth="2" /></svg>
                </Expander>
              )}
              <ItemText>{row.icon && <Icon name={row.icon} size={15} />}{row.name}</ItemText>
            </Item>
          ))}
        </Tree>
        <ScrollV $w={17}>
          <ScrollButton $w={17} $h={17} $edge="0 0 1px" aria-label="Scroll up"><Chevron turn={180} /></ScrollButton>
          <TreeThumb $w={5} $h={498} />
          <Spacer />
          <ScrollButton $w={17} $h={17} $edge="1px 0 0" aria-label="Scroll down"><Chevron /></ScrollButton>
        </ScrollV>
      </TreeWrap>
    </Browser>
  )
}

export default function App() {
  return (
    <Shell>
      <GlobalStyle />
      <TitleBar>
        <Brand>
          <svg width="22" height="22" viewBox="0 0 22 22">
            <path d="M3 0h18l1 4v18H4l-4-3V2z" fill="#1246b8" />
            <path d="M3 0h17v18H3z" fill="#1a68f5" /><path d="M0 2l3-2v18l-3 3z" fill="#6fa5f5" />
            <text x="7" y="14" fontFamily={FONT} fontWeight="bold" fontSize="13" fill="#fff">R</text>
          </svg>
          <IconButton $w={14} $h={20} aria-label="Home"><Icon name="home" size={14} /></IconButton>
        </Brand>
        <Title>Autodesk Revit 2024 - Project1 - 3D View: {'{3D}'}</Title>
        <TitleTools>
          <IconButton $w={10} aria-label="Collapse"><svg width="4" height="7" viewBox="0 0 4 7"><path d="M4 0v7L0 3z" fill="#333" /></svg></IconButton>
          <Tool name="bino" w={26} />
          <Tool name="user" w={24} />
          <SignIn>Sign In</SignIn>
          <Drop w={12} />
          <Tool name="cart" w={30} />
          <Divider $m={2} />
          <Tool name="help" w={30} />
          <Drop w={8} />
          <WindowButtons>
            <Tool name="min" w={24} h={20} size={14} />
            <Tool name="restore" w={25} h={20} size={14} />
            <Tool name="close" w={24} h={20} size={13} />
          </WindowButtons>
        </TitleTools>
      </TitleBar>
      <TabBar>
        <FileTab>File</FileTab>
        {tabs.map(tab => <RibbonTab key={tab}>{tab}</RibbonTab>)}
        <ActiveTab>Modify | Fascias</ActiveTab>
        <IconButton $w={28} $h={20} aria-label="Minimize ribbon"><Icon name="minimize" size={15} /></IconButton>
        <Drop w={8} h={20} />
      </TabBar>
      <RibbonPanels />
      <QuickAccess />
      <OptionsBar>Modify | Fascias</OptionsBar>
      <Work>
        <PropertiesPanel />
        <Splitter $w={4} />
        <ModelView />
        <Splitter $w={5} />
        <ProjectBrowser />
      </Work>
      <Status>
        <span>Roofs : Basic Roof : Generic - 300mm</span>
        <Icon name="people" />
        <StatusPart $gap={10}>
          <Chevron color="#aaa" />
          <StatusPart $gap={1}><Icon name="requests" /><Count $w={26} $off>:0</Count></StatusPart>
          <Icon name="list" />
          <Icon name="listOff" />
          <Design>Main Model <Chevron color="#aaa" /></Design>
        </StatusPart>
        <StatusPart>
          {['selLink', 'selUnder', 'selPin', 'selFace', 'drag', 'wait', 'filter'].map(name => <Tool key={name} name={name} w={26} h={20} size={15} />)}
          <Count $w={76}>:1</Count>
        </StatusPart>
      </Status>
    </Shell>
  )
}
